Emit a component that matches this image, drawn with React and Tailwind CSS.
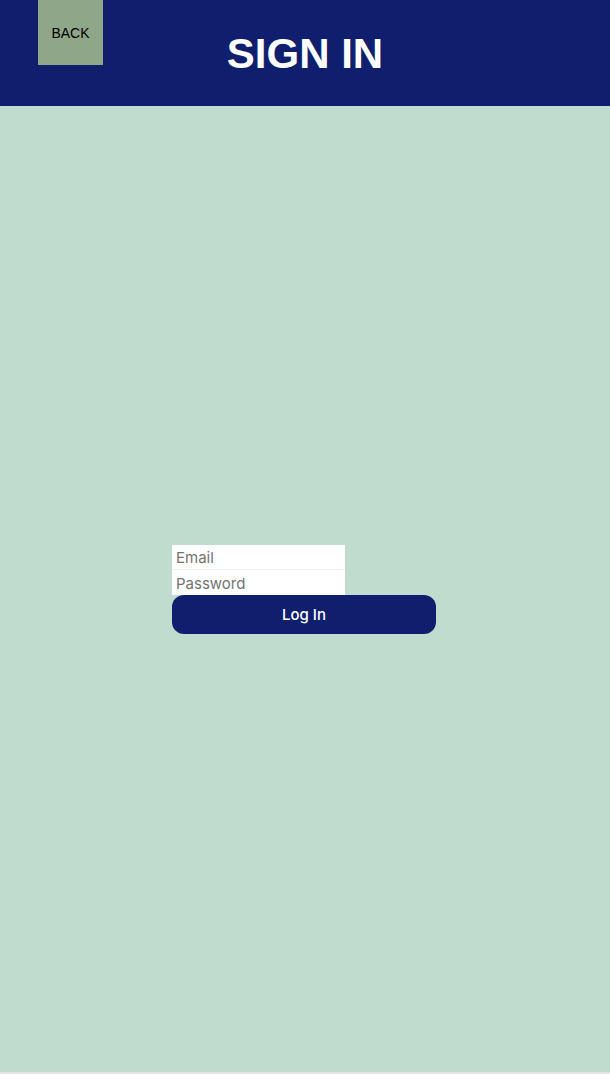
import React from 'react';

const App = () => {
  return (
    <div className="flex flex-col w-full h-[1074px] bg-[#e4e4e4]">
      <header className="relative flex items-center justify-center h-[106px] bg-[#0f1f6e] shrink-0">
        <button className="absolute top-0 left-[38px] w-[65px] h-[65px] pt-[2px] bg-[#8fa688] text-black text-[14px] font-['Liberation_Sans',Arial,sans-serif]">
          BACK
        </button>
        <h1 className="text-white text-[42px] font-bold font-['Liberation_Sans',Arial,sans-serif] mt-[1px]">
          SIGN IN
        </h1>
      </header>

      <main className="flex items-center justify-center h-[966px] pr-[2px] bg-[#c0dccf]">
        <div className="flex flex-col w-[264px] font-['Inter',sans-serif]">
          <input
            type="email"
            placeholder="Email"
            className="w-[173px] h-[25px] px-[4px] pt-[2px] bg-white text-[15px] placeholder-[#737373] border-b border-[#f0f0f0] outline-none"
          />
          <input
            type="password"
            placeholder="Password"
            className="w-[173px] h-[25px] px-[4px] pt-[2px] bg-white text-[15px] placeholder-[#737373] outline-none"
          />
          <button className="h-[39px] pt-[3px] rounded-[12px] bg-[#0f1f6e] text-white text-[15px] font-medium">
            Log In
          </button>
        </div>
      </main>
    </div>
  );
};

export default App;
